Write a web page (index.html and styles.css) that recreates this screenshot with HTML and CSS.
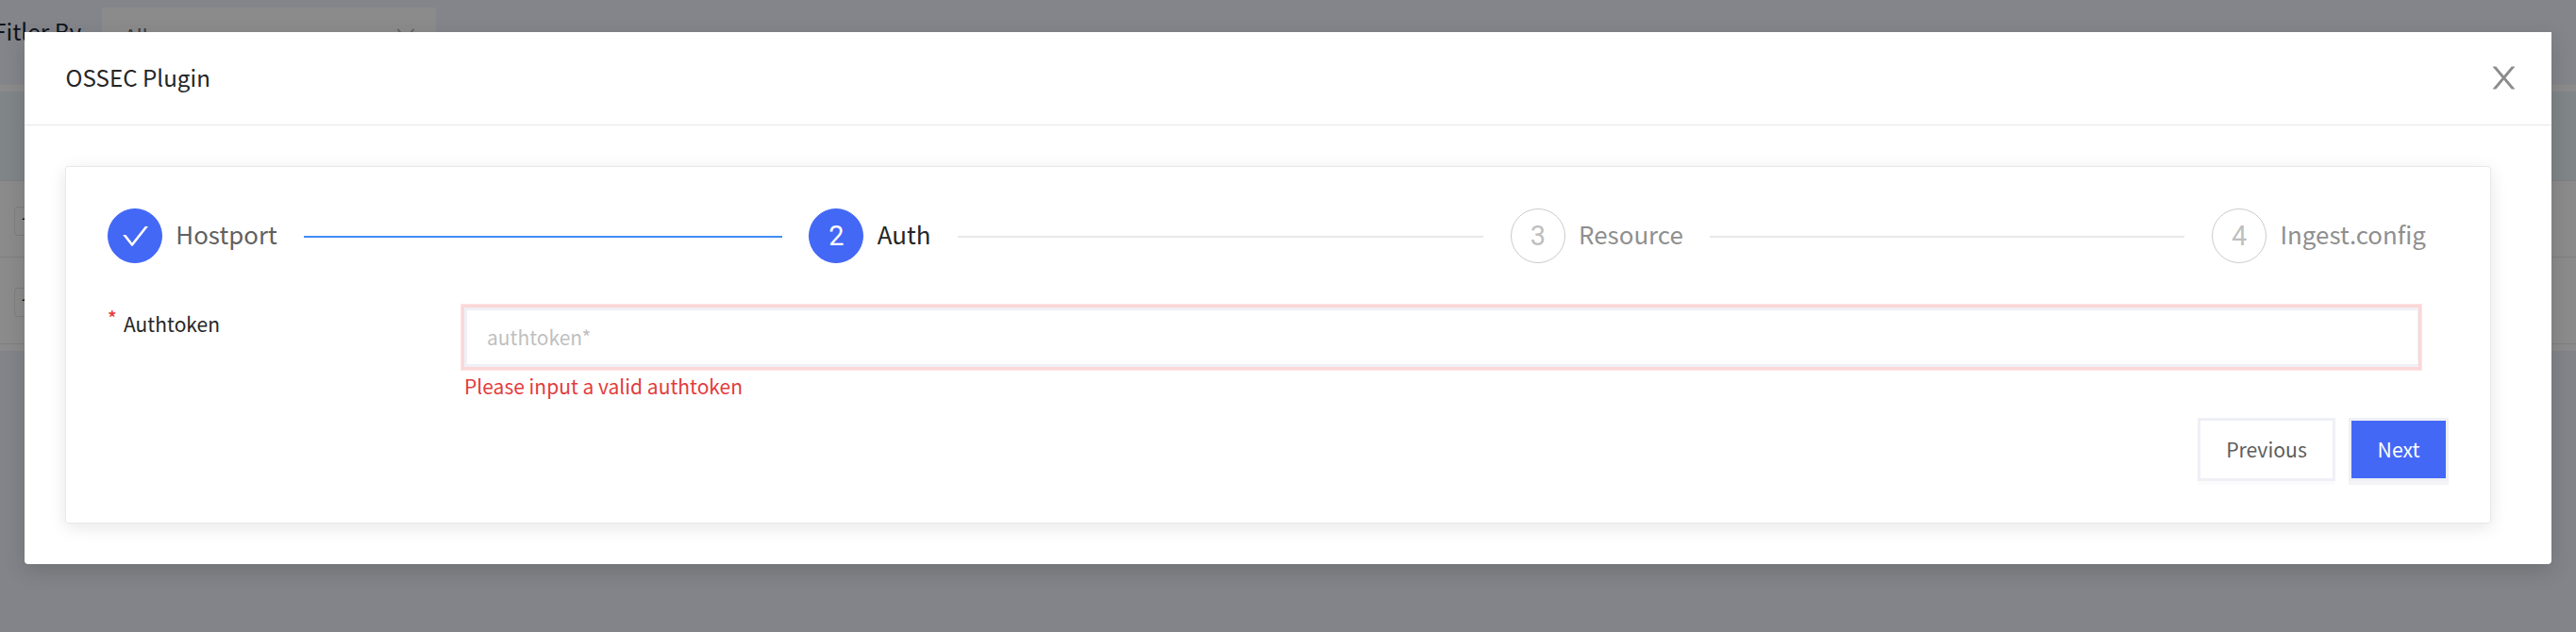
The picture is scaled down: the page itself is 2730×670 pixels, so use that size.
FILE: index.html
```html
<!DOCTYPE html>
<html lang="en">
<head>
<meta charset="utf-8">
<title>OSSEC Plugin</title>
<link rel="stylesheet" href="styles.css">
</head>
<body>
<div class="page">
  <div class="filter">
    <span class="filter-label">Fitler By</span>
    <div class="select"><span>All</span>
      <svg class="chevron" viewBox="0 0 20 12"><path d="M1.5 1 L10 11 L18.5 1"/></svg>
    </div>
  </div>
  <div class="table">
    <div class="thead"></div>
    <div class="trow first"><span class="expand">+</span></div>
    <div class="trow second"><span class="expand">+</span></div>
  </div>
</div>
<div class="modal">
  <header class="modal-header">
    <h1 class="modal-title">OSSEC Plugin</h1>
    <svg class="close" viewBox="64 64 896 896"><path d="M563.8 512l262.5-312.9c4.4-5.2.7-13.1-6.1-13.1h-79.8c-4.7 0-9.2 2.1-12.3 5.7L511.6 449.8 295.1 191.7c-3-3.6-7.5-5.7-12.3-5.7H203c-6.8 0-10.5 7.9-6.1 13.1L459.4 512 196.9 824.9A7.95 7.95 0 0 0 203 838h79.8c4.7 0 9.2-2.1 12.3-5.7l216.5-258.1 216.5 258.1c3 3.6 7.5 5.7 12.3 5.7h79.8c6.8 0 10.5-7.9 6.1-13.1L563.8 512z"/></svg>
  </header>
  <div class="card">
    <div class="steps">
      <div class="step done">
        <span class="step-icon"><svg class="check" viewBox="64 64 896 896"><path d="M912 190h-69.9c-9.8 0-19.1 4.5-25.1 12.2L404.7 724.5 207 474a32 32 0 0 0-25.1-12.2H112c-6.7 0-10.4 7.7-6.3 12.9l273.9 347c12.8 16.2 37.4 16.2 50.3 0l488.4-618.9c4.1-5.1.4-12.8-6.3-12.8z"/></svg></span>
        <span class="step-title">Hostport</span><span class="step-line"></span>
      </div>
      <div class="step active"><span class="step-icon">2</span><span class="step-title">Auth</span><span class="step-line"></span></div>
      <div class="step"><span class="step-icon">3</span><span class="step-title">Resource</span><span class="step-line"></span></div>
      <div class="step last"><span class="step-icon">4</span><span class="step-title">Ingest.config</span></div>
    </div>
    <div class="field">
      <label class="label"><span class="required">*</span><span>Authtoken</span></label>
      <div class="control">
        <div class="input">authtoken*</div>
        <div class="error">Please input a valid authtoken</div>
      </div>
    </div>
    <div class="actions">
      <button class="btn">Previous</button>
      <button class="btn primary">Next</button>
    </div>
  </div>
</div>
</body>
</html>
```
FILE: styles.css
```css
* { box-sizing: border-box; }
body {
  margin: 0;
  width: 2730px;
  height: 670px;
  overflow: hidden;
  position: relative;
  background: #838489;
  font-family: "Noto Sans CJK SC", "Noto Sans", sans-serif;
  font-size: 21px;
  line-height: 30px;
  color: #262626;
}
.filter {
  display: flex;
  height: 90px;
  padding-top: 8px;
  background: #84858a;
}
.filter-label {
  width: 115px;
  margin-left: -7px;
  padding-top: 10px;
  font-size: 24.4px;
  color: #0e141c;
  white-space: nowrap;
}
.select {
  display: flex;
  justify-content: space-between;
  width: 354px;
  height: 60px;
  padding: 15px 22px 0 24px;
  background: #8b8b8b;
  color: #3c3c3c;
}
.chevron {
  width: 20px;
  height: 12px;
  margin-top: 7px;
  fill: none;
  stroke: #606060;
  stroke-width: 1.8;
}
.table {
  height: 282px;
  padding-top: 7px;
  background: #8b8b8b;
}
.thead {
  height: 95px;
  background: #808587;
  border-bottom: 1px solid #7d8080;
}
.trow {
  padding: 27px 0 0 15px;
  border-bottom: 1px solid #7f7f7f;
}
.first { height: 81px; }
.second { height: 92px; padding-top: 32px; }
.expand {
  display: block;
  width: 31px;
  height: 31px;
  padding-left: 7px;
  border: 1px solid #7d7d7d;
  border-radius: 4px;
  line-height: 23px;
  color: #111;
}
.modal {
  position: absolute;
  left: 26px;
  top: 34px;
  width: 2678px;
  height: 564px;
  background: #fff;
  border-radius: 0 0 4px 4px;
  box-shadow: 0 7px 22px rgba(0, 0, 0, .15);
}
.modal-header {
  display: flex;
  align-items: center;
  justify-content: space-between;
  height: 99px;
  padding: 0 34px 0 43.5px;
  border-bottom: 1px solid #e8e8e8;
}
.modal-title {
  margin: 0;
  padding-bottom: 3px;
  font-size: 24.2px;
  font-weight: 400;
}
.close { width: 33px; height: 33px; margin-bottom: 1px; fill: #8c8c8c; }
.card {
  width: 2571px;
  height: 379px;
  margin: 43px 0 0 43px;
  padding: 44px 44px 0;
  border: 1px solid #e8e8e8;
  border-radius: 3px;
  box-shadow: 0 4px 18px rgba(0, 0, 0, .1);
}
.steps { display: flex; height: 58px; }
.step {
  display: flex;
  align-items: center;
  width: 743.4px;
  flex: none;
}
.last { width: 240px; }
.step-icon {
  display: flex;
  align-items: center;
  justify-content: center;
  width: 58px;
  height: 58px;
  flex: none;
  margin-right: 14.3px;
  border: 1px solid #cbcbcb;
  border-radius: 50%;
  font: 29px/56px Roboto, "Liberation Sans", sans-serif;
  color: #bfbfbf;
}
.done .step-icon, .active .step-icon {
  background: #4368f6;
  border-color: #4368f6;
  color: #fff;
}
.check { width: 29px; height: 29px; fill: #fff; }
.step-title {
  padding-bottom: 4px;
  font-size: 25.9px;
  color: #8f8f8f;
}
.done .step-title { color: #616161; }
.active .step-title { color: #262626; }
.step-line {
  flex: 1;
  height: 2px;
  margin: 2px 28.7px 0 28.3px;
  background: #e8e8e8;
}
.done .step-line { background: #418cf5; }
.field { display: flex; margin-top: 47px; }
.label {
  display: flex;
  width: 378px;
  padding-top: 2px;
}
.required {
  width: 17px;
  font-size: 20px;
  font-weight: 500;
  line-height: 18px;
  color: #e63b3b;
}
.input {
  width: 2071px;
  height: 63px;
  padding: 13px 20px 11px 21px;
  border: 3px solid #eff0f5;
  border-right-width: 1px;
  line-height: 31px;
  box-shadow: 0 0 0 3px #fbd7d7, 0 0 0 4px #fce6e6;
  color: #bfbfbf;
}
.error { margin-top: 5px; color: #e23c3c; }
.actions {
  display: flex;
  justify-content: flex-end;
  gap: 14px;
  margin-top: 19px;
}
.btn {
  width: 146px;
  height: 67px;
  padding: 0 0 2px;
  border: 3px solid #eff0f6;
  background: #fff;
  box-shadow: 0 4px rgba(0, 0, 0, .015);
  font: inherit;
  font-size: 21.2px;
  color: #5d5d5d;
}
.primary {
  width: 106px;
  background: #4368f6;
  color: #fff;
  box-shadow: 0 4px rgba(0, 0, 0, .045);
}
```
